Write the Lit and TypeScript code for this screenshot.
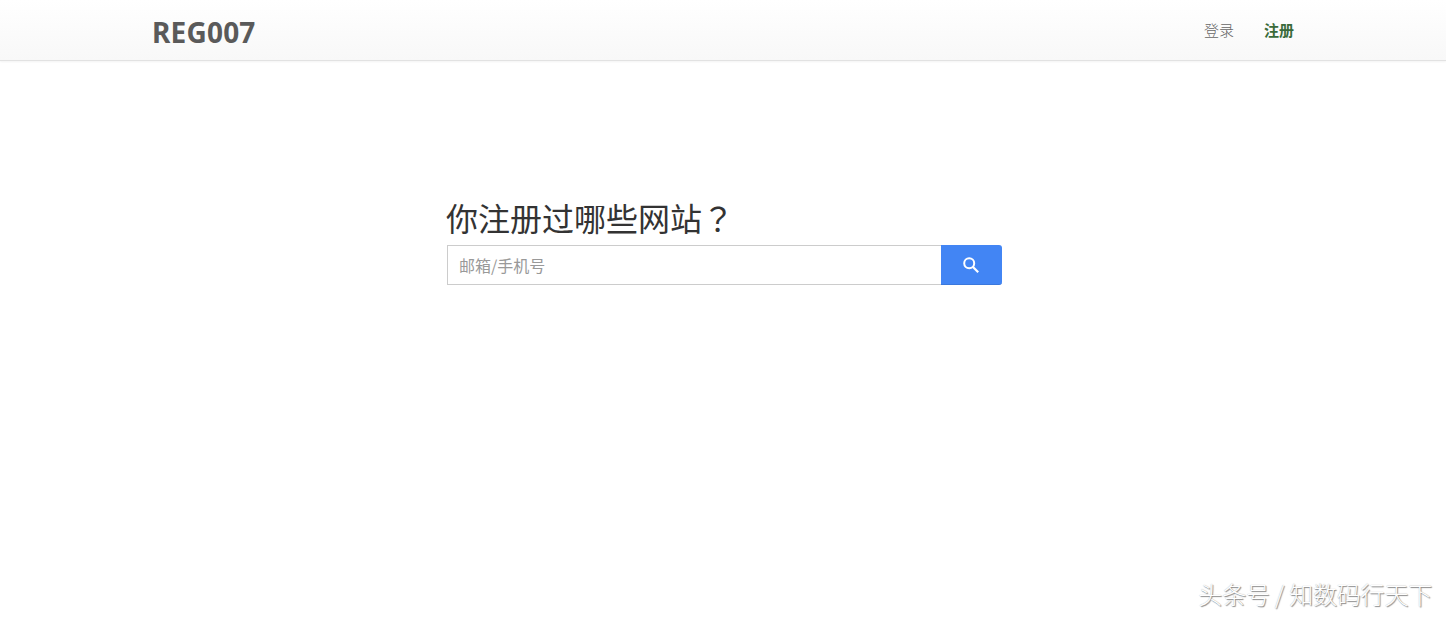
import { LitElement, html, css } from "lit";
import { customElement } from "lit/decorators.js";

@customElement("app-root")
export class AppRoot extends LitElement {
  static styles = css`
    :host {
      display: block;
      position: relative;
      height: 618px;
      overflow: hidden;
      background: #fff;
      color: #333;
      font-family: "Open Sans", "Noto Sans CJK SC", sans-serif;
    }
    .nav {
      height: 60px;
      box-sizing: content-box;
      border-bottom: 1px solid #e2e2e2;
      box-shadow: 0 1px 2px rgba(0, 0, 0, 0.05);
      background: linear-gradient(to bottom, #ffffff, #f8f8f8);
      display: flex;
      align-items: center;
      padding: 0 152px 0 152px;
    }
    .brand {
      font-family: "Noto Sans", sans-serif;
      font-weight: 700;
      font-size: 28px;
      letter-spacing: 0.2px;
      color: #5a5a5a;
      line-height: 60px;
      margin-top: 4px;
    }
    .links {
      margin-left: auto;
      display: flex;
      gap: 30px;
      font-size: 15px;
      line-height: 20px;
      font-family: "Noto Sans CJK SC", sans-serif;
    }
    .links span { color: #666; font-weight: 300; }
    .links .on { color: #3a6b3a; font-weight: 700; }
    .main {
      width: 555px;
      margin: 134px 0 0 447px;
      display: flex;
      flex-direction: column;
    }
    h1 {
      margin: 0 0 0 -1px;
      font-family: "Noto Sans CJK SC", sans-serif;
      font-weight: 400;
      font-size: 32px;
      line-height: 44px;
      color: #333;
    }
    h1 span { font-family: "Noto Sans CJK TC", sans-serif; }
    .search {
      display: flex;
      height: 40px;
      margin-top: 6px;
    }
    .input {
      flex: 1;
      box-sizing: border-box;
      border: 1px solid #ccc;
      border-right: 0;
      padding: 0 11px;
      font-size: 16px;
      line-height: 38px;
      color: #999;
      font-family: "Noto Sans CJK SC", sans-serif;
      font-weight: 400;
      background: #fff;
    }
    .btn {
      width: 61px;
      padding-right: 2px;
      background: #4285f4;
      border-radius: 0 3px 3px 0;
      border-bottom: 1px solid #3b78dc;
      box-sizing: border-box;
      display: flex;
      align-items: center;
      justify-content: center;
    }
    .btn svg { display: block; }
    .mark {
      position: absolute;
      right: 14px;
      bottom: 9px;
      font-family: "Noto Sans CJK SC", sans-serif;
      font-weight: 300;
      font-size: 24px;
      letter-spacing: -0.2px;
      line-height: 30px;
      color: #fff;
      text-shadow: 1px 1px 1px #888, 0 0 1px #aaa;
      white-space: nowrap;
    }
  `;

  render() {
    return html`
      <div class="nav">
        <div class="brand">REG007</div>
        <div class="links"><span>登录</span><span class="on">注册</span></div>
      </div>
      <div class="main">
        <h1>你注册过哪些网站<span>？</span></h1>
        <div class="search">
          <div class="input">邮箱/手机号</div>
          <div class="btn">
            <svg width="18" height="18" viewBox="0 0 18 18" fill="none" stroke="#fff">
              <circle cx="7.2" cy="7.2" r="5" stroke-width="2"></circle>
              <path d="M11 11l5.2 5.2" stroke-width="2.2"></path>
            </svg>
          </div>
        </div>
      </div>
      <div class="mark">头条号 / 知数码行天下</div>
    `;
  }
}
